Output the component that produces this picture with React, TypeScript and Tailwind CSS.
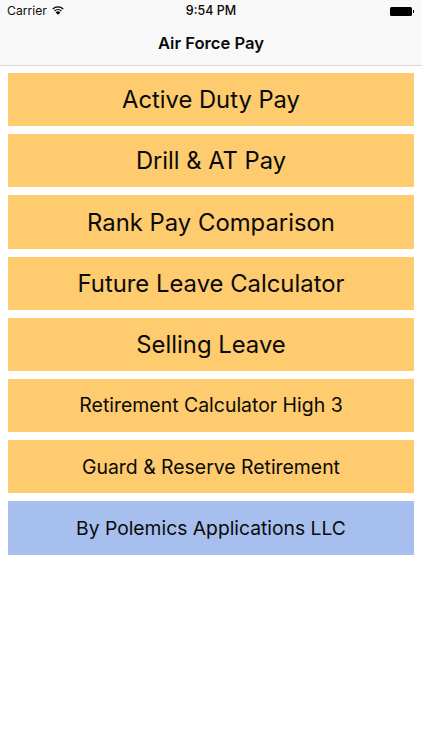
const buttons = [
  { label: 'Active Duty Pay', size: 'text-[23.75px]', color: 'bg-[#fecb6e]' },
  { label: 'Drill & AT Pay', size: 'text-[23.75px]', color: 'bg-[#fecb6e]' },
  { label: 'Rank Pay Comparison', size: 'text-[23.85px]', color: 'bg-[#fecb6e]' },
  { label: 'Future Leave Calculator', size: 'text-[23.85px]', color: 'bg-[#fecb6e]' },
  { label: 'Selling Leave', size: 'text-[23.85px]', color: 'bg-[#fecb6e]' },
  { label: 'Retirement Calculator High 3', size: 'text-[19.45px]', color: 'bg-[#fecb6e]' },
  { label: 'Guard & Reserve Retirement', size: 'text-[19.4px]', color: 'bg-[#fecb6e]' },
  { label: 'By Polemics Applications LLC', size: 'text-[19.3px]', color: 'bg-[#a7bfee]' },
];

function WifiIcon() {
  return (
    <svg width="12" height="9" viewBox="0 0 14 10" className="text-black">
      <path d="M7 10 L4.4 7.2 A3.7 3.7 0 0 1 9.6 7.2 Z" fill="currentColor" />
      <path d="M3 5.6 A5.8 5.8 0 0 1 11 5.6" fill="none" stroke="currentColor" strokeWidth="1.5" />
      <path d="M0.8 3.4 A8.9 8.9 0 0 1 13.2 3.4" fill="none" stroke="currentColor" strokeWidth="1.5" />
    </svg>
  );
}

function BatteryIcon() {
  return (
    <div className="flex items-center">
      <div className="h-[9px] w-[22px] rounded-[1.5px] bg-black" />
      <div className="ml-[1px] h-[3px] w-[1px] bg-black" />
    </div>
  );
}

export default function App() {
  return (
    <div className="flex h-[750px] w-[422px] flex-col overflow-hidden bg-white font-['Inter',sans-serif] text-[#0a0a0a]">
      <header className="h-[66px] border-b border-[#d9d9d9] bg-[#f8f8f8]">
        <div className="grid h-[22px] grid-cols-3 items-center px-[7px]">
          <div className="flex items-center gap-[5px] text-[12.2px]">
            <span>Carrier</span>
            <WifiIcon />
          </div>
          <div className="text-center text-[12.5px] font-medium">9:54 PM</div>
          <div className="flex justify-end pr-[1px]">
            <BatteryIcon />
          </div>
        </div>
        <h1 className="mt-[9px] text-center text-[16.6px] font-semibold leading-[24px]">Air Force Pay</h1>
      </header>
      <main className="flex flex-col gap-[8px] px-2 pt-[7px]">
        {buttons.map((button) => (
          <button
            key={button.label}
            className={`flex h-[53.2px] w-[406px] items-center justify-center pt-[1px] ${button.color} ${button.size}`}
          >
            {button.label}
          </button>
        ))}
      </main>
    </div>
  );
}
